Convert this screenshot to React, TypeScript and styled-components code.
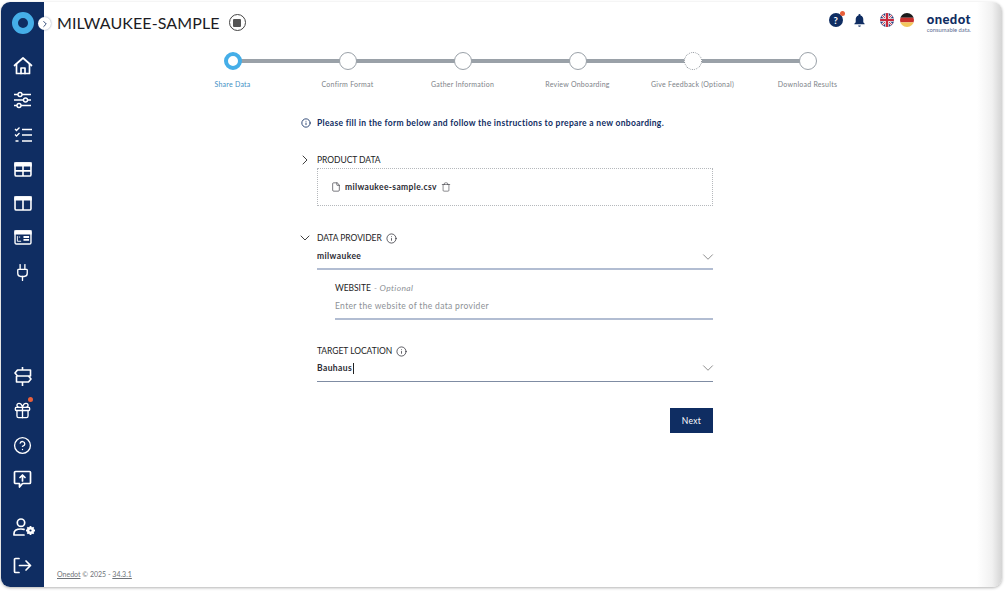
import React from "react"
import styled, { createGlobalStyle } from "styled-components"
import { ChevronDown, ChevronRight, CircleHelp, File, Info, Plug, Trash, Gift } from "lucide-react"

const navy = "#0f2d62"
const ink = "#1c1c24"

const GlobalStyle = createGlobalStyle`
  html, body {
    margin: 0;
    padding: 0;
    background: #fff;
    overflow: hidden;
  }
  body {
    font-family: Lato, "Open Sans", sans-serif;
    color: ${ink};
  }
`

const Screen = styled.div`
  width: 1005px;
  height: 591px;
  padding: 2px 3px 4px 1px;
  box-sizing: border-box;
`

const Frame = styled.div`
  display: flex;
  height: 100%;
  border-radius: 9px;
  overflow: hidden;
  background: linear-gradient(90deg, #fff 97.5%, #f1f1f1 99%, #d4d4d4 100%);
  box-shadow: 0 1px 3px rgba(0, 0, 0, 0.3);
`

const Sidebar = styled.nav`
  width: 43px;
  flex: none;
  background: ${navy};
  display: flex;
  flex-direction: column;
  align-items: center;
  padding: 10px 0 12px;
  box-sizing: border-box;
`

const LogoRing = styled.div`
  width: 22px;
  height: 22px;
  border-radius: 50%;
  box-sizing: border-box;
  border: 6px solid #45aee8;
  background: ${navy};
  margin-bottom: 22px;
`

const NavGroup = styled.div<{ $bottom?: boolean }>`
  display: flex;
  flex-direction: column;
  align-items: center;
  gap: ${p => (p.$bottom ? 14.6 : 14.4)}px;
  margin-top: ${p => (p.$bottom ? "auto" : "0")};
`

const NavIcon = styled.div<{ $mt?: number }>`
  position: relative;
  width: 20px;
  height: 20px;
  margin-top: ${p => p.$mt ?? 0}px;
  color: #fff;
  display: flex;
  align-items: center;
  justify-content: center;
`

const Dot = styled.span`
  position: absolute;
  top: -4px;
  right: 0;
  width: 5px;
  height: 5px;
  border-radius: 50%;
  background: #e8603c;
`

const Main = styled.main`
  flex: 1;
  min-width: 0;
  position: relative;
  display: flex;
  flex-direction: column;
`

const CollapseButton = styled.div`
  position: absolute;
  left: -6px;
  top: 15px;
  width: 13px;
  height: 13px;
  border-radius: 50%;
  background: #fff;
  color: ${navy};
  display: flex;
  align-items: center;
  justify-content: center;
  box-shadow: 0 0 2px rgba(15, 45, 98, 0.5);
`

const Header = styled.header`
  height: 49px;
  display: flex;
  align-items: flex-start;
  padding: 0 31px 0 13px;
  flex: none;
  box-sizing: border-box;
`

const TitleGroup = styled.div`
  display: flex;
  align-items: center;
  height: 41px;
`

const Title = styled.h1`
  margin: 0;
  font-size: 16px;
  font-weight: 400;
  letter-spacing: 0.1px;
  color: ${ink};
`

const StopIcon = styled.span`
  width: 17px;
  height: 17px;
  box-sizing: border-box;
  margin-left: 9px;
  border: 1.5px solid #444;
  border-radius: 50%;
  display: flex;
  align-items: center;
  justify-content: center;
  &::after {
    content: "";
    width: 8px;
    height: 8px;
    border-radius: 1px;
    background: #555;
  }
`

const HeaderRight = styled.div`
  margin-left: auto;
  padding-top: 11px;
  display: flex;
  align-items: flex-start;
`

const HelpBadge = styled.span`
  position: relative;
  width: 14px;
  height: 14px;
  border-radius: 50%;
  background: ${navy};
  color: #fff;
  font-size: 9.5px;
  font-weight: 700;
  display: flex;
  align-items: center;
  justify-content: center;
  &::after {
    content: "";
    position: absolute;
    top: -2px;
    right: -2px;
    width: 5px;
    height: 5px;
    border-radius: 50%;
    background: #e8603c;
  }
`

const BellIcon = styled.svg`
  width: 13px;
  height: 14px;
  margin-left: 10px;
  margin-right: 14px;
  fill: ${navy};
`

const Flag = styled.svg`
  width: 14px;
  height: 14px;
  border-radius: 50%;
  display: block;
  & + & {
    margin-left: 6px;
  }
`

const Brand = styled.div`
  margin-left: 13px;
  display: flex;
  flex-direction: column;
  align-items: flex-start;
  color: ${navy};
`

const BrandName = styled.span`
  font-size: 13px;
  line-height: 13px;
  font-weight: 900;
  letter-spacing: 0.4px;
`

const BrandTag = styled.span`
  font-size: 5.8px;
  line-height: 7px;
  color: #5c6d90;
`

const Stepper = styled.ol`
  list-style: none;
  margin: 0;
  padding: 0 0 0 131px;
  display: flex;
  flex: none;
`

const Step = styled.li`
  position: relative;
  width: 115px;
  display: flex;
  flex-direction: column;
  align-items: center;
  &:not(:last-child)::after {
    content: "";
    position: absolute;
    left: 50%;
    top: 8px;
    width: 115px;
    height: 4px;
    background: #9aa1a8;
  }
`

const StepCircle = styled.span<{ $state: "active" | "todo" | "optional" }>`
  position: relative;
  z-index: 1;
  width: 18px;
  height: 18px;
  margin-top: 1px;
  box-sizing: border-box;
  border-radius: 50%;
  background: #fff;
  border: ${p =>
    p.$state === "active"
      ? "4px solid #45aee8"
      : p.$state === "optional"
        ? "1px dotted #8a9097"
        : "1.5px solid #9aa1a8"};
`

const StepLabel = styled.span<{ $active?: boolean }>`
  margin-top: 10px;
  font-size: 7px;
  line-height: 9px;
  letter-spacing: 0.25px;
  white-space: nowrap;
  color: ${p => (p.$active ? "#3f8fc4" : "#7d8288")};
`

const Form = styled.section`
  width: 396px;
  margin: 28px 0 0 273px;
  display: flex;
  flex-direction: column;
  flex: none;
`

const Notice = styled.div`
  display: flex;
  align-items: center;
  margin-left: -16px;
  gap: 6px;
  font-size: 8.5px;
  line-height: 12px;
  font-weight: 700;
  letter-spacing: 0.31px;
  white-space: nowrap;
  color: ${navy};
`

const SectionLabel = styled.div<{ $top: number }>`
  position: relative;
  display: flex;
  align-items: center;
  gap: 4px;
  margin-top: ${p => p.$top}px;
  font-size: 8.5px;
  line-height: 12px;
  color: ${ink};
  letter-spacing: -0.05px;
`

const Caret = styled.span`
  position: absolute;
  left: -20px;
  top: -2px;
  display: flex;
  color: #222;
`

const DropZone = styled.div`
  margin-top: 2px;
  height: 38px;
  box-sizing: border-box;
  border: 1px dotted #b5b8bc;
  display: flex;
  align-items: center;
  padding-left: 13px;
  gap: 4px;
  font-size: 8.5px;
  font-weight: 700;
  letter-spacing: 0.35px;
  color: #2b2b33;
`

const SelectField = styled.div<{ $pale?: boolean }>`
  height: ${p => (p.$pale ? 26 : 25)}px;
  box-sizing: border-box;
  padding: ${p => (p.$pale ? "1px 0 0" : "0 0 2px")};
  display: flex;
  align-items: center;
  justify-content: space-between;
  border-bottom: ${p => (p.$pale ? "2px solid #b2bdd2" : "1px solid #7f8ca3")};
  font-size: 8.5px;
  font-weight: 700;
  letter-spacing: 0.4px;
  color: #2b2b33;
`

const SelectValue = styled.span<{ $caret?: boolean }>`
  display: inline-block;
  line-height: 11px;
  padding-right: 1px;
  border-right: ${p => (p.$caret ? "1px solid #222" : "none")};
`

const SelectCaret = styled.span`
  display: flex;
  margin-right: -4px;
  color: #777;
`

const SubField = styled.div`
  margin: 12px 0 0 18px;
  display: flex;
  flex-direction: column;
`

const SubLabel = styled.div`
  font-size: 8.5px;
  line-height: 12px;
  color: ${ink};
  letter-spacing: -0.05px;
`

const Optional = styled.em`
  color: #8d9196;
  letter-spacing: 0.35px;
  margin-left: 1px;
`

const TextInput = styled.div`
  height: 26px;
  box-sizing: border-box;
  border-bottom: 2px solid #b2bdd2;
  display: flex;
  align-items: center;
  font-size: 8.5px;
  letter-spacing: 0.33px;
  color: #8d9196;
`

const ButtonRow = styled.div`
  display: flex;
  justify-content: flex-end;
  margin-top: 26px;
`

const NextButton = styled.button`
  width: 43px;
  height: 25px;
  padding: 0;
  border: 0;
  background: ${navy};
  color: #fff;
  font-family: inherit;
  font-size: 8.5px;
  letter-spacing: 0.3px;
`

const Footer = styled.footer`
  margin-top: auto;
  padding: 0 0 8px 13px;
  font-size: 7px;
  line-height: 9px;
  color: #6f7378;
`

const FooterLink = styled.a`
  text-decoration: underline;
  color: inherit;
`

const iconProps = { size: 19, strokeWidth: 1.7 }

const HomeIcon = () => (
  <svg width="20" height="20" viewBox="0 0 20 20" fill="none" stroke="#fff" strokeWidth="1.7" strokeLinejoin="round" strokeLinecap="round">
    <path d="M1.500 9.500 10 2l8.500 7.500" />
    <path d="M3.500 8v9.500h13V8" />
    <path d="M8 17.500v-5.500h4v5.500" />
  </svg>
)

const SlidersIcon = () => (
  <svg width="19" height="18" viewBox="0 0 19 18" fill={navy} stroke="#fff" strokeWidth="1.4">
    <path d="M1 3.500h17M1 9h17M1 14.500h17" />
    <circle cx="7" cy="3.500" r="2" />
    <circle cx="12.500" cy="9" r="2" />
    <circle cx="6" cy="14.500" r="2" />
  </svg>
)

const ChecksIcon = () => (
  <svg width="18" height="17" viewBox="0 0 18 17" fill="none" stroke="#fff" strokeWidth="1.6">
    <path d="M1 3l1.500 1.500L5.500 1.500M1 8.500 2.500 10l3-3" strokeWidth="1.300" />
    <path d="M8 3.500h10M8 9h10M8 15h10M1.500 15h3" />
  </svg>
)

const TableIcon = ({ split }: { split?: boolean }) => (
  <svg width="18" height="15" viewBox="0 0 19 16" fill="none" stroke="#fff" strokeWidth="1.7">
    <rect x="1" y="1" width="17" height="14" rx="1.500" />
    <path d="M1 1h17v3H1z" fill="#fff" />
    <path d={split ? "M9.500 4v11" : "M9.500 4v11M1 9.500h17"} />
  </svg>
)

const CardIcon = () => (
  <svg width="18" height="15" viewBox="0 0 19 16" fill="none" stroke="#fff" strokeWidth="1.500">
    <rect x="1" y="1" width="17" height="14" rx="1.500" />
    <path d="M1 1h17v3H1z" fill="#fff" />
    <path d="M10 7.500h6M10 10.500h6" strokeWidth="2" />
    <path d="M3.500 6.500v5.500h4M5 7.500h1.500" strokeWidth="1" />
  </svg>
)

const SignpostIcon = () => (
  <svg width="18" height="19" viewBox="0 0 18 19" fill="none" stroke="#fff" strokeWidth="1.600" strokeLinejoin="round">
    <path d="M8.500 0v3M8.500 15v4" />
    <path d="M3.500 3h13v6h-13L1 6z" />
    <path d="M2.500 9v6h12l2.500-3-2.500-3" />
  </svg>
)

const FeedbackIcon = () => (
  <svg width="19" height="19" viewBox="0 0 19 19" fill="none" stroke="#fff" strokeWidth="1.700" strokeLinejoin="round" strokeLinecap="round">
    <path d="M2.500 1.500h14a1 1 0 0 1 1 1v10a1 1 0 0 1-1 1H9.500l-3 3.500v-3.500h-4a1 1 0 0 1-1-1v-10a1 1 0 0 1 1-1z" />
    <path d="M9.500 11V5M7 7.500l2.500-2.500L12 7.500" />
  </svg>
)

const UserGearIcon = () => (
  <svg width="23" height="18" viewBox="0 0 23 18" fill="none" stroke="#fff" strokeWidth="1.700" style={{ flex: "none", marginLeft: 3 }}>
    <circle cx="8" cy="4.700" r="3.700" />
    <path d="M1 17v-1.500c0-2.600 2.400-4.500 7-4.500 1.200 0 2.200.1 3 .4M1 17h10" strokeLinecap="round" />
    <circle cx="17.500" cy="12.500" r="2.300" strokeWidth="2.400" />
    <path d="M17.500 8v2M17.500 15v2M13 12.500h2M20 12.500h2M14.300 9.300l1.400 1.400M19.300 14.300l1.400 1.400M14.300 15.700l1.400-1.400M19.300 10.700l1.400-1.400" strokeWidth="1.800" />
  </svg>
)

const LogoutIcon = () => (
  <svg width="19" height="17" viewBox="0 0 19 17" fill="none" stroke="#fff" strokeWidth="1.700" strokeLinecap="round" strokeLinejoin="round">
    <path d="M6 1.500H2.500a1 1 0 0 0-1 1v12a1 1 0 0 0 1 1H6" />
    <path d="M6.500 8.500h11M13 4l4.500 4.500L13 13" />
  </svg>
)

const UkFlag = () => (
  <Flag viewBox="0 0 13 13">
    <rect width="13" height="13" fill="#2b3f7e" />
    <path d="M0 0l13 13M13 0L0 13" stroke="#e6e6ea" strokeWidth="2.400" />
    <path d="M0 0l13 13M13 0L0 13" stroke="#c8283c" strokeWidth="0.800" />
    <path d="M6.500 0v13M0 6.500h13" stroke="#e6e6ea" strokeWidth="3.400" />
    <path d="M6.500 0v13M0 6.500h13" stroke="#c8283c" strokeWidth="2" />
  </Flag>
)

const DeFlag = () => (
  <Flag viewBox="0 0 13 13">
    <rect width="13" height="4.400" fill="#1a1a1a" />
    <rect y="4.400" width="13" height="4.300" fill="#c8302c" />
    <rect y="8.700" width="13" height="4.300" fill="#f2c75c" />
  </Flag>
)

const SelectChevron = () => (
  <SelectCaret><ChevronDown size={18} strokeWidth={1.1} /></SelectCaret>
)

const steps = [
  { label: "Share Data", state: "active" as const },
  { label: "Confirm Format", state: "todo" as const },
  { label: "Gather Information", state: "todo" as const },
  { label: "Review Onboarding", state: "todo" as const },
  { label: "Give Feedback (Optional)", state: "optional" as const },
  { label: "Download Results", state: "todo" as const },
]

export default function App() {
  return (
    <Screen>
      <GlobalStyle />
      <Frame>
        <Sidebar>
          <LogoRing />
          <NavGroup>
            <NavIcon><HomeIcon /></NavIcon>
            <NavIcon><SlidersIcon /></NavIcon>
            <NavIcon><ChecksIcon /></NavIcon>
            <NavIcon><TableIcon /></NavIcon>
            <NavIcon><TableIcon split /></NavIcon>
            <NavIcon><CardIcon /></NavIcon>
            <NavIcon><Plug {...iconProps} /></NavIcon>
          </NavGroup>
          <NavGroup $bottom>
            <NavIcon><SignpostIcon /></NavIcon>
            <NavIcon><Gift {...iconProps} /><Dot /></NavIcon>
            <NavIcon><CircleHelp {...iconProps} /></NavIcon>
            <NavIcon><FeedbackIcon /></NavIcon>
            <NavIcon $mt={12.5}><UserGearIcon /></NavIcon>
            <NavIcon $mt={3.5}><LogoutIcon /></NavIcon>
          </NavGroup>
        </Sidebar>
        <Main>
          <CollapseButton><ChevronRight size={10} strokeWidth={2} /></CollapseButton>
          <Header>
            <TitleGroup>
              <Title>MILWAUKEE-SAMPLE</Title>
              <StopIcon />
            </TitleGroup>
            <HeaderRight>
              <HelpBadge>?</HelpBadge>
              <BellIcon viewBox="0 0 24 24">
                <path d="M12 1a2 2 0 0 1 2 2v.6c3.400.9 5 3.700 5 7.400v5l2.500 3v1h-19v-1L5 16v-5c0-3.700 1.600-6.500 5-7.400V3a2 2 0 0 1 2-2zM9.500 22h5a2.500 2.500 0 0 1-5 0z" />
              </BellIcon>
              <UkFlag />
              <DeFlag />
              <Brand>
                <BrandName>onedot</BrandName>
                <BrandTag>consumable data.</BrandTag>
              </Brand>
            </HeaderRight>
          </Header>
          <Stepper>
            {steps.map(s => (
              <Step key={s.label}>
                <StepCircle $state={s.state} />
                <StepLabel $active={s.state === "active"}>{s.label}</StepLabel>
              </Step>
            ))}
          </Stepper>
          <Form>
            <Notice>
              <Info size={10} strokeWidth={2} />
              Please fill in the form below and follow the instructions to prepare a new onboarding.
            </Notice>
            <SectionLabel $top={25}>
              <Caret><ChevronRight size={16} strokeWidth={1.3} /></Caret>
              PRODUCT DATA
            </SectionLabel>
            <DropZone>
              <File size={10} strokeWidth={1.5} />
              milwaukee-sample.csv
              <Trash size={10} strokeWidth={1.3} />
            </DropZone>
            <SectionLabel $top={26}>
              <Caret><ChevronDown size={16} strokeWidth={1.3} /></Caret>
              DATA PROVIDER
              <Info size={11} strokeWidth={1.5} />
            </SectionLabel>
            <SelectField $pale>
              <SelectValue>milwaukee</SelectValue>
              <SelectChevron />
            </SelectField>
            <SubField>
              <SubLabel>WEBSITE <Optional>- Optional</Optional></SubLabel>
              <TextInput>Enter the website of the data provider</TextInput>
            </SubField>
            <SectionLabel $top={25}>
              TARGET LOCATION
              <Info size={11} strokeWidth={1.5} />
            </SectionLabel>
            <SelectField>
              <SelectValue $caret>Bauhaus</SelectValue>
              <SelectChevron />
            </SelectField>
            <ButtonRow>
              <NextButton>Next</NextButton>
            </ButtonRow>
          </Form>
          <Footer>
            <FooterLink>Onedot</FooterLink> © 2025 - <FooterLink>34.3.1</FooterLink>
          </Footer>
        </Main>
      </Frame>
    </Screen>
  )
}
